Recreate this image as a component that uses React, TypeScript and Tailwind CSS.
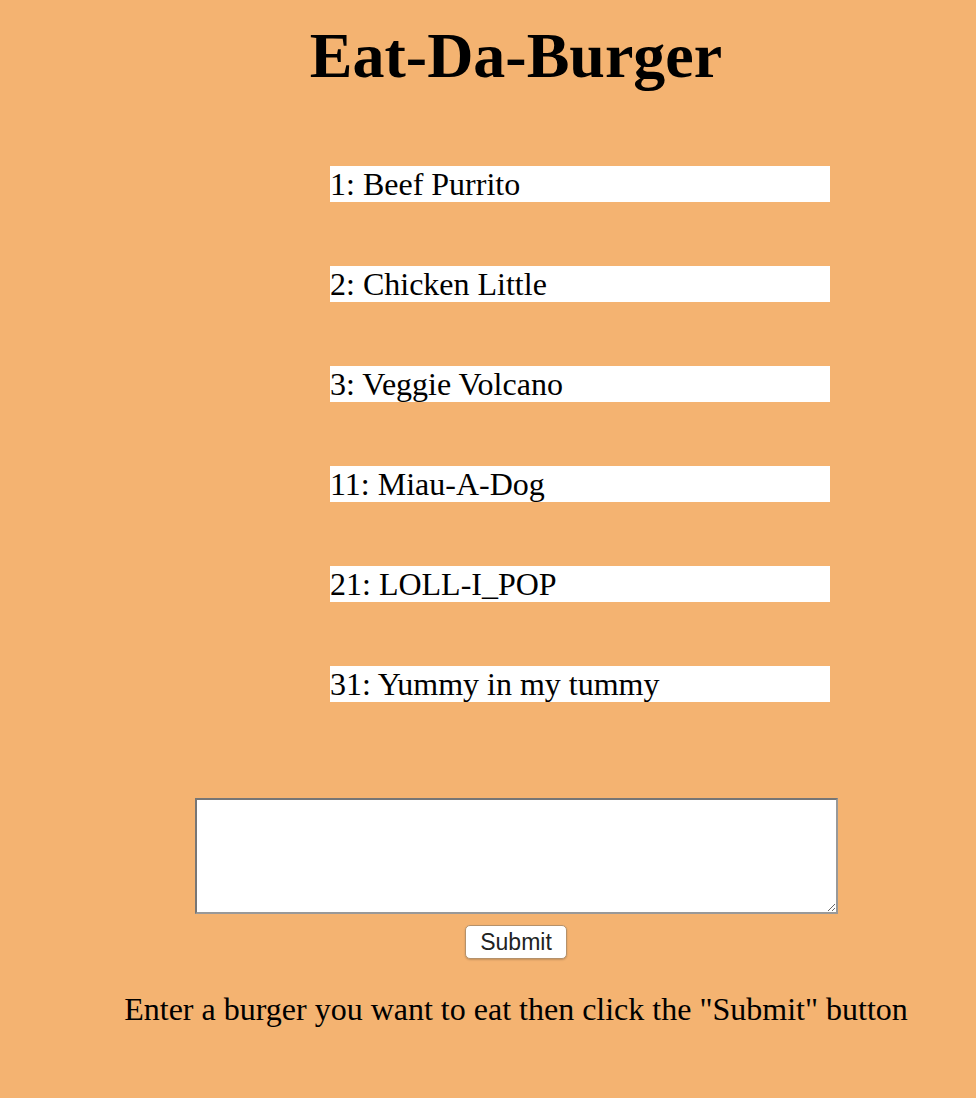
const burgers = [
  '1: Beef Purrito',
  '2: Chicken Little',
  '3: Veggie Volcano',
  '11: Miau-A-Dog',
  '21: LOLL-I_POP',
  '31: Yummy in my tummy',
];

export default function App() {
  return (
    <div className="min-h-[1098px] bg-[#f4b371] text-black font-['Liberation_Serif',serif]">
      <div className="pl-[56px]">
        <h1 className="pt-[18px] text-center text-[64px] font-bold leading-[76px]">Eat-Da-Burger</h1>

        <ul className="mt-[72px] flex flex-col gap-[64px] pl-[274px]">
          {burgers.map((b) => (
            <li key={b} className="w-[500px] h-[36px] bg-white text-[32px] leading-[36px]">
              {b}
            </li>
          ))}
        </ul>

        <form className="mt-[96px] flex flex-col items-center">
          <textarea className="w-[643px] h-[116px] bg-white border-2 border-t-[#767676] border-l-[#767676] border-r-[#999] border-b-[#999] resize" />
          <button
            type="button"
            className="mt-[11px] w-[102px] h-[34px] bg-white rounded-[5px] border border-[#b5916a] shadow-[0_1px_2px_rgba(0,0,0,0.2)] text-[23px] leading-[32px] text-[#222] font-['Liberation_Sans',sans-serif]"
          >
            Submit
          </button>
        </form>

        <p className="mt-[32px] text-center text-[32px] leading-[36px]">
          Enter a burger you want to eat then click the "Submit" button
        </p>
      </div>
    </div>
  );
}
